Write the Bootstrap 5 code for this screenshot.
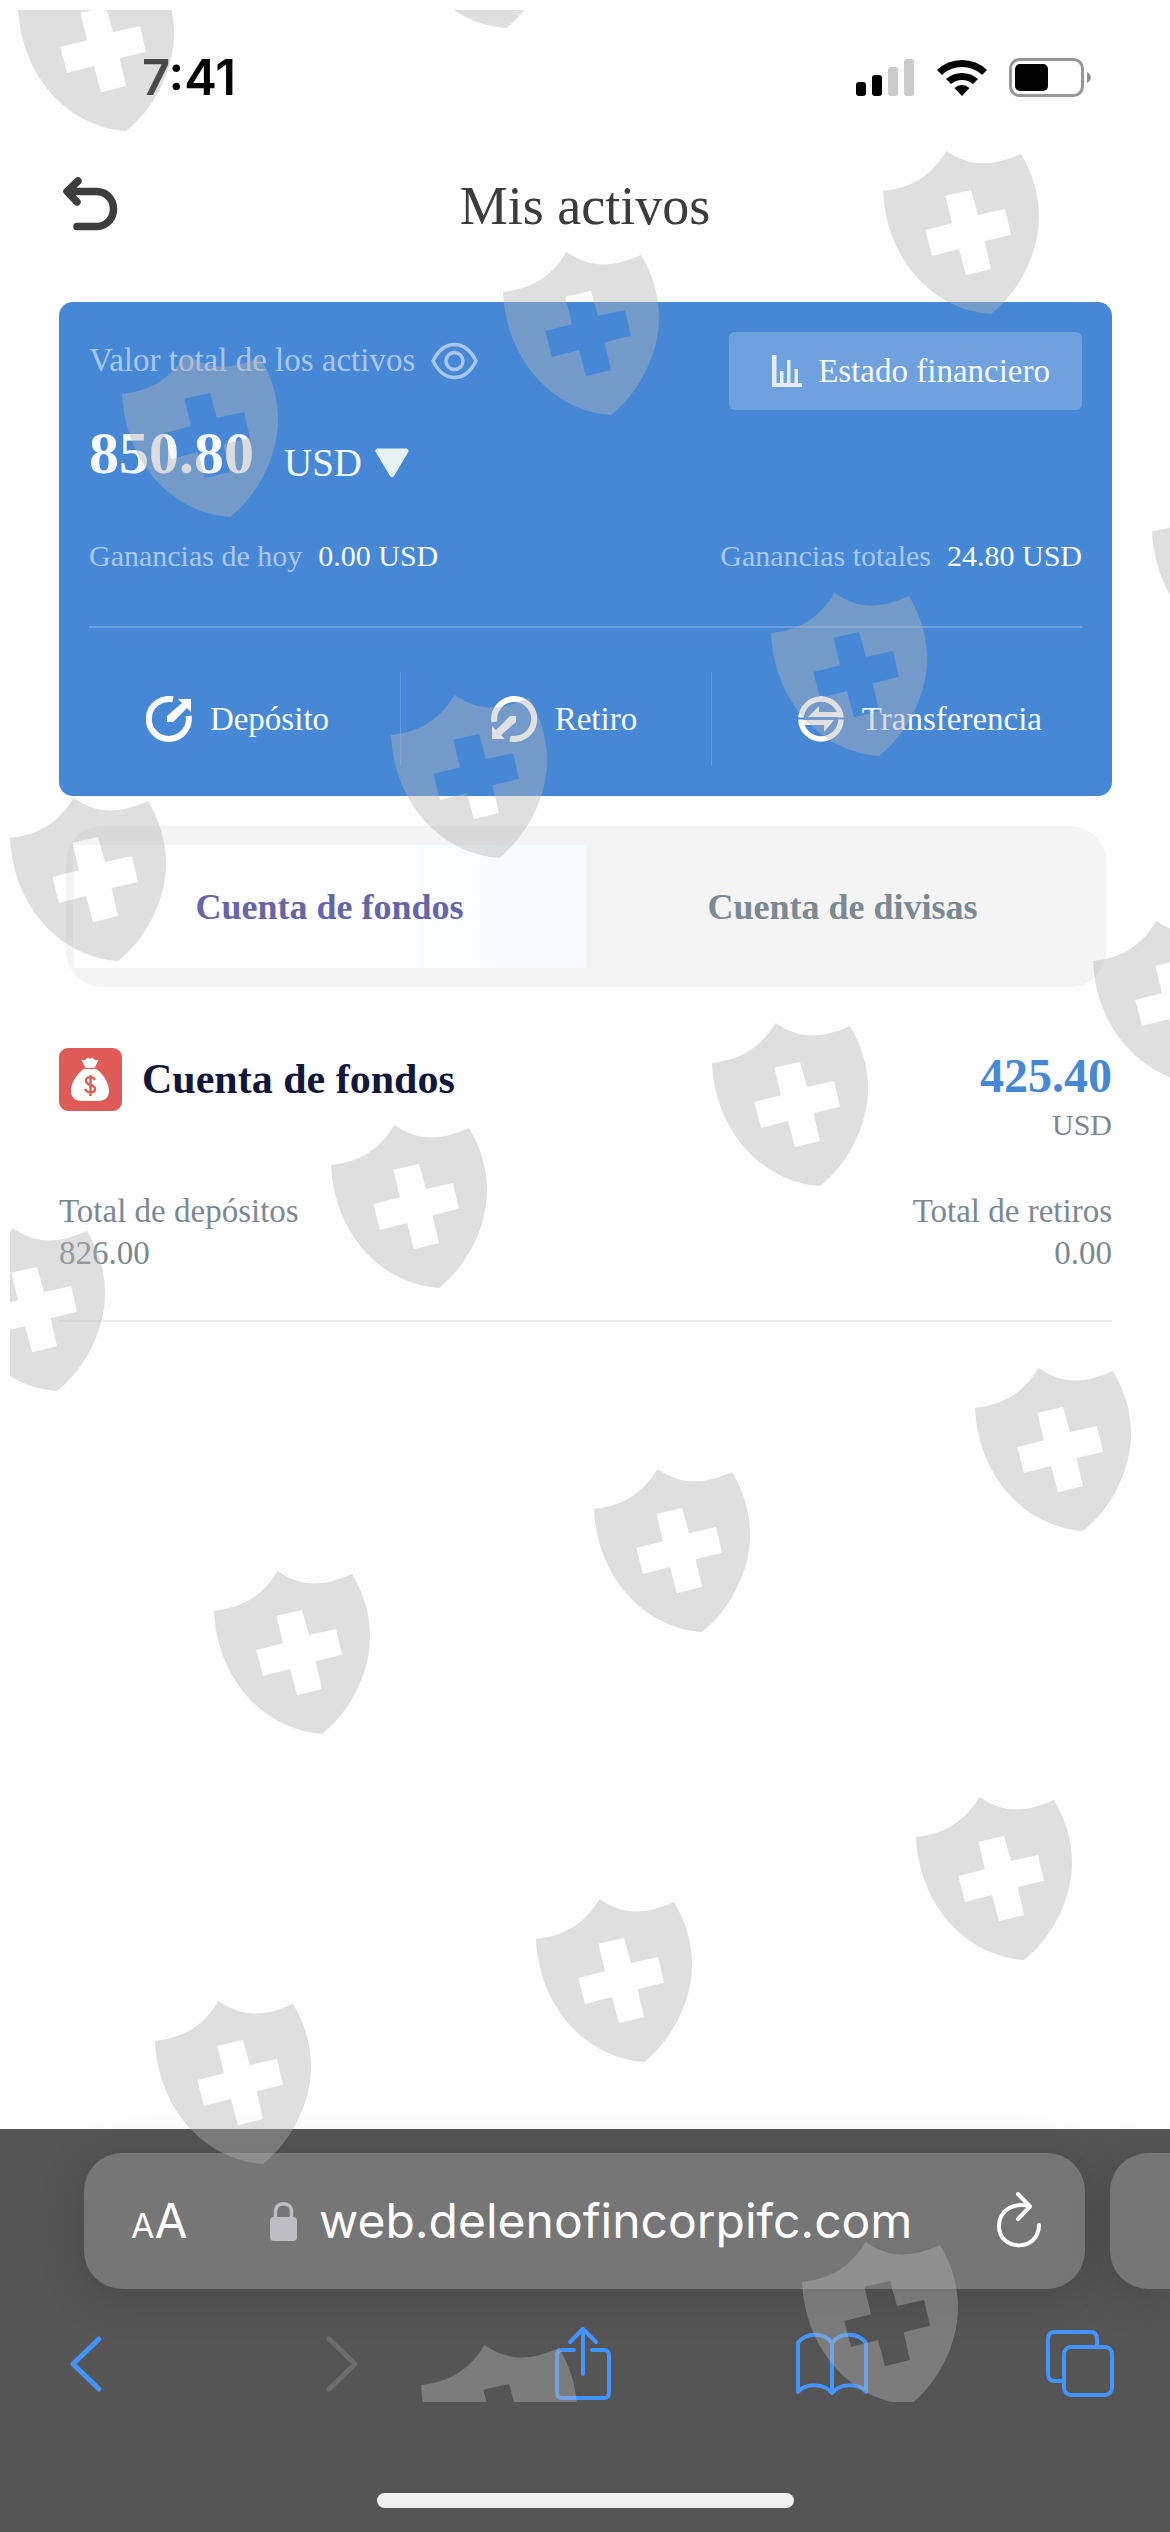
<!DOCTYPE html>
<html lang="es">
<head>
<meta charset="utf-8">
<meta name="viewport" content="width=device-width, initial-scale=1">
<title>Mis activos</title>
<link href="https://cdn.jsdelivr.net/npm/bootstrap@5.3.0/dist/css/bootstrap.min.css" rel="stylesheet">
<style>
  :root { --brand: #4788d6; --muted: #7b8993; --link-blue: #4394ff; }
  body { font-family: "Liberation Serif", serif; font-size: 33px; line-height: 42px; background: #fefefe; color: #3c3c3c; }
  svg { display: block; flex: none; }
  .ui-font { font-family: Inter, "Liberation Sans", sans-serif; }
  .bare { background: none; border: 0; padding: 0; color: inherit; font: inherit; }
  .fs-30 { font-size: 30px; line-height: 42px; }

  .status-bar { height: 156px; padding: 0 79px 0 142px; color: #000; }
  .status-icons { gap: 22px; }
  .clock { font-size: 49px; font-weight: 600; }
  .page-head { height: 100px; padding: 0 59px; margin-bottom: 46px; }
  .page-head h1 { font-size: 54px; line-height: 60px; }
  .side { flex: 1 1 0; }

  .content { padding: 0 58px 0 59px; }
  .balance-card { background: var(--brand); color: #f5f9ff; border-radius: 14px; padding: 30px 0; }
  .inset { margin: 0 30px; }
  .soft { color: #a9c7ed; }
  .caption-line { line-height: 56px; }
  .report-btn { height: 78px; padding: 0 32px 0 43px; border-radius: 6px; background: rgba(255,255,255,.21); color: #f5f9ff; font-size: 33px; line-height: 42px; }
  .report-btn:hover { background: rgba(255,255,255,.3); color: #fff; }
  .balance { font-size: 60px; line-height: 60px; }
  .balance-row { margin-top: 13px; gap: 30px; }
  .currency-pick { gap: 12px; }
  .currency { font-size: 39px; line-height: 40px; appearance: none; -webkit-appearance: none; outline: 0; }
  .gains { margin-top: 52px; margin-bottom: 49px; }
  .split { border-top: 2px solid rgba(255,255,255,.2); margin-bottom: 44px; }
  .actions { display: grid; grid-template-columns: 34fr 31fr 40fr; }
  .actions a { height: 94px; padding-left: 16px; gap: 18px; color: #f5f9ff; }
  .actions a + a { border-left: 1px solid rgba(255,255,255,.16); }

  .switcher { margin: 30px 6px 61px 7px; padding: 19px 7px; border-radius: 36px; background: #f4f4f4; }
  .switcher button { flex: 1 1 0; height: 123px; font-size: 36px; font-weight: 700; color: var(--muted); }
  .switcher .active { color: #6565a8; background: linear-gradient(90deg, #fefefe 66%, #fafdff 68%, #fafdff 80%, #f7fbff 82%); }

  .account { padding-bottom: 46px; border-bottom: 2px solid #ebecec; color: var(--muted); }
  .account h2 { font-size: 42px; line-height: 63px; color: #10173a; }
  .amount { font-size: 48px; line-height: 56px; color: var(--brand); }
  .totals { margin-top: 44px; }

  .browser { background: #555; padding: 24px 0; color: #fff; }
  .url-row { padding-left: 84px; gap: 25px; }
  .url-box { height: 136px; min-width: 0; padding: 0 43px 0 47px; border-radius: 38px; background: #767676; box-shadow: 0 8px 48px rgba(0,0,0,.16); }
  .next-tab { flex: none; width: 60px; height: 136px; border-radius: 38px 0 0 38px; background: #767676; box-shadow: 0 8px 48px rgba(0,0,0,.16); }
  .url-box input { flex: 1 1 0; font-size: 48px; line-height: 60px; min-width: 0; margin-left: 22px; outline: 0; }
  .text-size { flex: none; width: 139px; font-size: 48px; line-height: 60px; text-align: left; }
  .text-size span { font-size: 34px; line-height: 34px; }
  .tools { height: 72px; margin: 39px 50px 93px 46px; color: var(--link-blue); }
  .tools button { width: 80px; height: 72px; }
  .tools .forward { color: #6c6c6c; padding-left: 14px; }
  .home-bar { width: 417px; height: 15px; border-radius: 8px; background: #f0f0f0; }

  .stamps { position: absolute; inset: 10px 0 130px 10px; overflow: hidden; pointer-events: none; z-index: 5; }
</style>
</head>
<body>
<div class="position-relative d-flex flex-column min-vh-100 overflow-hidden">

  <div class="status-bar ui-font d-flex align-items-center justify-content-between">
    <span class="clock">7:41</span>
    <div class="status-icons d-flex align-items-center">
      <svg width="59" height="38" viewBox="0 0 59 38" role="img" aria-label="Señal">
        <rect x="0" y="23" width="10" height="14" rx="3"/><rect x="16" y="16" width="10" height="21" rx="3"/>
        <g fill="#cbcbcb"><rect x="32" y="8" width="10" height="29" rx="3"/><rect x="48" y="0" width="10" height="37" rx="3"/></g>
      </svg>
      <svg width="50" height="38" viewBox="0 0 50 38" role="img" aria-label="Wi-Fi">
        <path d="M0 11A36 36 0 0 1 50 11L45 16A29 29 0 0 0 5 16Z"/>
        <path d="M9 20A24 24 0 0 1 41 20L36 25A17 17 0 0 0 14 25Z"/>
        <path d="M17.500 29A11 11 0 0 1 32.500 29L25 37Z"/>
      </svg>
      <svg width="82" height="40" viewBox="0 0 82 40" role="img" aria-label="Batería">
        <rect x="1.500" y="1.500" width="72" height="36" rx="9" fill="none" stroke="#979797" stroke-width="3"/>
        <rect x="6" y="6" width="33" height="27" rx="5"/><path d="M78 14C83 16 83 23 78 25Z" fill="#8c8c8c"/>
      </svg>
    </div>
  </div>

  <header class="page-head d-flex align-items-center">
    <div class="side">
      <button type="button" class="bare d-block" aria-label="Volver">
        <svg width="62" height="60" viewBox="0 0 62 60" fill="none" stroke="#3d3d3d" stroke-width="7.500" stroke-linecap="round" stroke-linejoin="round">
          <path d="M19 5L8 15.500L18 26M9 15.500H38C60 17 60 49 38 50.500H18"/>
        </svg>
      </button>
    </div>
    <h1 class="m-0 fw-normal">Mis activos</h1>
    <div class="side"></div>
  </header>

  <main class="content flex-grow-1">
    <section class="balance-card">
      <div class="inset">
        <div class="d-flex justify-content-between align-items-start">
          <div class="d-flex align-items-center gap-3 soft caption-line">
            <span>Valor total de los activos</span>
            <button type="button" class="bare" aria-label="Ocultar saldo">
              <svg width="47" height="40" viewBox="0 0 47 40" fill="none" stroke="#a9c7ed" stroke-width="3.500">
                <path d="M2 21C13 -1 34 -1 45 21C34 43 13 43 2 21Z"/><circle cx="23.500" cy="21" r="8.500"/>
              </svg>
            </button>
          </div>
          <button type="button" class="btn report-btn border-0 d-flex align-items-center gap-3">
            <svg width="30" height="32" viewBox="0 0 30 32" fill="#e4edf9">
              <path d="M0 0H4.500V28H30V32H0Z"/><rect x="8" y="16" width="3.500" height="13"/><rect x="15" y="5" width="3.500" height="24"/><rect x="22.500" y="14" width="3.500" height="15"/>
            </svg>
            Estado financiero
          </button>
        </div>
        <div class="balance-row d-flex align-items-end">
          <strong class="balance">850.80</strong>
          <div class="currency-pick d-flex align-items-center">
            <select class="bare currency" aria-label="Moneda"><option>USD</option></select>
            <svg width="34" height="30" viewBox="0 0 34 30"><path d="M3 3H31L17 26.500Z" fill="#e6f3f3" stroke="#e6f3f3" stroke-width="5" stroke-linejoin="round"/></svg>
          </div>
        </div>
        <div class="gains fs-30 d-flex justify-content-between">
          <div class="d-flex gap-3"><span class="soft">Ganancias de hoy</span><span>0.00 USD</span></div>
          <div class="d-flex gap-3"><span class="soft">Ganancias totales</span><span>24.80 USD</span></div>
        </div>
        <div class="split"></div>
      </div>
      <nav class="actions" aria-label="Operaciones">
        <a href="#deposito" class="d-flex align-items-center justify-content-center text-decoration-none">
          <svg width="46" height="46" viewBox="0 0 46 46">
            <path d="M27 3.400A20 20 0 1 0 42.600 20" fill="none" stroke="#fff" stroke-width="6"/>
            <path d="M32 3H45V16L41 12L27 26H21V20L36 7Z" fill="#fff"/>
          </svg>
          Depósito
        </a>
        <a href="#retiro" class="d-flex align-items-center justify-content-center text-decoration-none">
          <svg width="46" height="46" viewBox="0 0 46 46">
            <g transform="rotate(180 23 23)"><path d="M27 3.400A20 20 0 1 0 42.600 20" fill="none" stroke="#fff" stroke-width="6"/>
            <path d="M32 3H45V16L41 12L27 26H21V20L36 7Z" fill="#fff"/></g>
          </svg>
          Retiro
        </a>
        <a href="#transferencia" class="d-flex align-items-center justify-content-center text-decoration-none">
          <svg width="46" height="46" viewBox="0 0 46 46">
            <circle cx="23" cy="23" r="20" fill="none" stroke="#fff" stroke-width="5.500"/>
            <path d="M10 21L21 10V16H45V21ZM36 24L26 36V29H1V24Z" fill="#fff"/>
            <path d="M0 22.500H46" stroke="#4788d6" stroke-width="2"/>
          </svg>
          Transferencia
        </a>
      </nav>
    </section>

    <div class="switcher d-flex" role="tablist">
      <button type="button" class="bare active" role="tab" aria-selected="true">Cuenta de fondos</button>
      <button type="button" class="bare" role="tab" aria-selected="false">Cuenta de divisas</button>
    </div>

    <section class="account">
      <div class="d-flex justify-content-between align-items-start">
        <div class="d-flex align-items-center">
          <svg class="me-3" width="63" height="63" viewBox="0 0 63 63" role="img" aria-label="Fondos">
            <rect width="63" height="63" rx="9" fill="#df5b57"/>
            <path d="M22.500 12L26 12L29 9.500L31 11L33 9.500L36 12L39.500 12L35.500 20C43 24 50 34 50 43C50 50 45 53 38 53H24C17 53 12 50 12 43C12 34 19 24 26.500 20Z" fill="#fff"/>
            <path d="M26 20.500H36" stroke="#df5b57" stroke-width="1.200"/>
            <path d="M36 32C34 28 27 28 27 33C27 38 36 36 36 41C36 45.500 28 45.500 26 41M31.500 27V48" fill="none" stroke="#df5b57" stroke-width="2.400"/>
          </svg>
          <h2 class="m-0 ms-1 fw-bold">Cuenta de fondos</h2>
        </div>
        <div class="text-end">
          <div class="amount fw-bold">425.40</div>
          <div class="fs-30">USD</div>
        </div>
      </div>
      <div class="totals d-flex justify-content-between">
        <div>Total de depósitos<br>826.00</div>
        <div class="text-end">Total de retiros<br>0.00</div>
      </div>
    </section>
  </main>

  <footer class="browser ui-font">
    <div class="url-row d-flex">
      <div class="url-box flex-grow-1 d-flex align-items-center">
        <button type="button" class="bare text-size" aria-label="Tamaño del texto"><span>A</span>A</button>
        <svg width="27" height="40" viewBox="0 0 27 40" fill="#bebdc4">
          <path d="M5.500 17V10.500C5.500 0 21.500 0 21.500 10.500V17" fill="none" stroke="#bebdc4" stroke-width="3.500"/><rect y="16" width="27" height="24" rx="4"/>
        </svg>
        <input class="bare" type="text" value="web.delenofincorpifc.com" aria-label="Dirección">
        <button type="button" class="bare" aria-label="Recargar">
          <svg width="45" height="60" viewBox="0 0 45 60" fill="none" stroke="#fff" stroke-width="4" stroke-linecap="round" stroke-linejoin="round">
            <path d="M42 34C42 61 2 61 2 35C2 18 18 11 33 15.500M21 3L33 15.500L21 28"/>
          </svg>
        </button>
      </div>
      <div class="next-tab"></div>
    </div>
    <div class="tools d-flex justify-content-between">
      <button type="button" class="bare d-flex align-items-center justify-content-center" aria-label="Atrás">
        <svg width="34" height="58" viewBox="0 0 34 58" fill="none" stroke="currentColor" stroke-width="5" stroke-linecap="round" stroke-linejoin="round"><path d="M30 4L4 29L30 54"/></svg>
      </button>
      <button type="button" class="bare forward d-flex align-items-center justify-content-center" aria-label="Adelante">
        <svg width="34" height="58" viewBox="0 0 34 58" fill="none" stroke="currentColor" stroke-width="5" stroke-linecap="round" stroke-linejoin="round"><path d="M4 4L30 29L4 54"/></svg>
      </button>
      <button type="button" class="bare d-flex align-items-center justify-content-center" aria-label="Compartir">
        <svg width="58" height="76" viewBox="0 0 58 76" fill="none" stroke="currentColor" stroke-width="4" stroke-linecap="round" stroke-linejoin="round"><path d="M20 24H8Q3 24 3 30V66Q3 72 8 72H50Q55 72 55 66V30Q55 24 50 24H38M29 48V4M16 16L29 3L42 16"/></svg>
      </button>
      <button type="button" class="bare d-flex align-items-center justify-content-center" aria-label="Marcadores">
        <svg width="72" height="64" viewBox="0 0 72 64" fill="none" stroke="currentColor" stroke-width="4" stroke-linejoin="round"><path d="M36 61V11C28 0 10 0 2 11V60C10 51 28 51 36 61C44 51 62 51 70 60V11C62 0 44 0 36 11"/></svg>
      </button>
      <button type="button" class="bare d-flex align-items-center justify-content-center" aria-label="Pestañas">
        <svg width="68" height="68" viewBox="0 0 68 68" fill="none" stroke="currentColor" stroke-width="4"><rect x="18" y="17" width="48" height="48" rx="7"/><path d="M18 51H9Q2 51 2 44V9Q2 2 9 2H44Q51 2 51 9V16"/></svg>
      </button>
    </div>
    <div class="home-bar mx-auto"></div>
  </footer>

  <div class="stamps" aria-hidden="true">
    <svg width="1160" height="2392" viewBox="10 10 1160 2392">
      <defs>
        <path id="shield" fill-rule="evenodd" d="M0 0C27 -3 48 -14 63.500 -40C86 -25 106 -23 138 -37C150 -17 156 4 156 26C156 62 136 101 108 123C50 119 3 68 0 0ZM62.400 4.700L69 32.300L42.300 39L49 65L76 58L83 84.300L108 78L101.600 50.300L128 43.700L122 18L95 24L88 -1Z"/>
      </defs>
      <g fill="#b4b4b4" fill-opacity=".41">
        <use href="#shield" x="18" y="8"/><use href="#shield" x="398" y="-95"/>
        <use href="#shield" x="883" y="191"/><use href="#shield" x="503" y="292"/><use href="#shield" x="122" y="394"/>
        <use href="#shield" x="1152" y="531"/><use href="#shield" x="771" y="633"/><use href="#shield" x="391" y="735"/><use href="#shield" x="10" y="838"/>
        <use href="#shield" x="1093" y="961"/><use href="#shield" x="712" y="1063"/><use href="#shield" x="331" y="1165"/><use href="#shield" x="-51" y="1268"/>
        <use href="#shield" x="975" y="1408"/><use href="#shield" x="594" y="1509"/><use href="#shield" x="214" y="1611"/>
        <use href="#shield" x="916" y="1837"/><use href="#shield" x="536" y="1939"/><use href="#shield" x="155" y="2041"/>
        <use href="#shield" x="802" y="2282"/><use href="#shield" x="421" y="2385"/>
      </g>
    </svg>
  </div>
</div>
<script src="https://cdn.jsdelivr.net/npm/bootstrap@5.3.0/dist/js/bootstrap.bundle.min.js"></script>
</body>
</html>
